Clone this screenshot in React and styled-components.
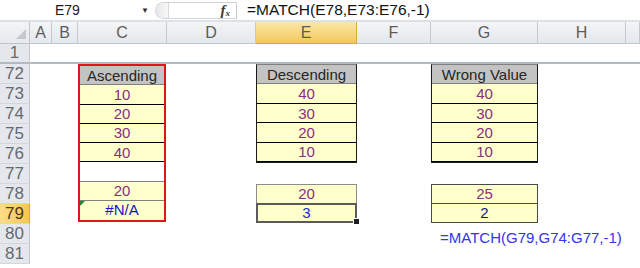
import styled, { createGlobalStyle, css } from 'styled-components';

const GlobalStyle = createGlobalStyle`
    html, body{
        margin: 0;
        padding: 0;
        background: #ffffff;
    }
    body{
        width: 640px;
        height: 268px;
        overflow: hidden;
        font-family: "Liberation Sans", Arial, sans-serif;
    }
`

const COLUMNS = [
    { key: 'A', width: 22 },
    { key: 'B', width: 26 },
    { key: 'C', width: 89 },
    { key: 'D', width: 89 },
    { key: 'E', width: 101, active: true },
    { key: 'F', width: 74 },
    { key: 'G', width: 107 },
    { key: 'H', width: 88 },
];

const ROWS = [72, 73, 74, 75, 76, 77, 78, 79, 80, 81];

const PURPLE = '#86307f';

function App(){
    return(
        <>
            <GlobalStyle />
            <Window>
                <FormulaBar>
                    <NameBox>
                        <span>E79</span>
                        <Arrow>▼</Arrow>
                    </NameBox>
                    <Grip>
                        <Knob />
                        <Fx>f<sub>x</sub></Fx>
                    </Grip>
                    <Formula>=MATCH(E78,E73:E76,-1)</Formula>
                </FormulaBar>
                <Sheet>
                    <Corner>
                        <svg width="10" height="10" viewBox="0 0 10 10">
                            <path d="M10 0 L10 10 L0 10 Z" fill="#c3c8cf" />
                        </svg>
                    </Corner>
                    {COLUMNS.map(c => (
                        <ColHead key={c.key} $active={c.active}>{c.key}</ColHead>
                    ))}
                    <ColHead />

                    <RowHead $row={2} $hidden>1</RowHead>
                    <HiddenLine />

                    {ROWS.map((r, i) => (
                        <RowHead key={r} $row={i + 3} $active={r === 79}>{r}</RowHead>
                    ))}

                    <RedBlock>
                        <Cell $tone="head">Ascending</Cell>
                        <Cell $line="#000">10</Cell>
                        <Cell $line="#000">20</Cell>
                        <Cell $line="#000">30</Cell>
                        <Cell $line="#000">40</Cell>
                        <Cell $tone="blank" $line="#808080" />
                        <Cell $line="#808080">20</Cell>
                        <Cell $ink="#1414c8" $line="transparent">
                            <ErrorMark />
                            #N/A
                        </Cell>
                    </RedBlock>

                    <Block $col={6} $row={3} $span={5}>
                        <Cell $tone="head" $line="#808080">Descending</Cell>
                        <Cell $line="#000">40</Cell>
                        <Cell $line="#000">30</Cell>
                        <Cell $line="#000">20</Cell>
                        <Cell $line="#000">10</Cell>
                    </Block>
                    <Block $col={6} $row={9} $span={2} $edge="#8c8c8c">
                        <Cell $line="#8c8c8c">20</Cell>
                        <Cell $ink="#2424e0" $line="transparent" $selected>
                            3
                            <Handle />
                        </Cell>
                    </Block>

                    <Block $col={8} $row={3} $span={5}>
                        <Cell $tone="head" $line="#808080">Wrong Value</Cell>
                        <Cell $line="#000">40</Cell>
                        <Cell $line="#000">30</Cell>
                        <Cell $line="#000">20</Cell>
                        <Cell $line="#000">10</Cell>
                    </Block>
                    <Block $col={8} $row={9} $span={2} $edge="#4a4a4a">
                        <Cell $line="#4a4a4a">25</Cell>
                        <Cell $ink="#141490" $line="transparent">2</Cell>
                    </Block>

                    <Note>=MATCH(G79,G74:G77,-1)</Note>
                </Sheet>
            </Window>
        </>
    );
}

export default App;

const Window = styled.div`
    width: 640px;
    height: 268px;
    display: flex;
    flex-direction: column;
    background: #ffffff;
`

const FormulaBar = styled.div`
    height: 20px;
    display: flex;
    align-items: center;
    background: #ffffff;
    border-bottom: 2px solid #dde1e6;
`

const NameBox = styled.div`
    width: 152px;
    height: 100%;
    display: flex;
    align-items: center;
    justify-content: space-between;
    box-sizing: border-box;
    padding: 0 3px 0 55px;
    font-size: 14px;
    color: #1a1a1a;
`

const Arrow = styled.span`
    font-size: 8px;
    color: #333;
`

const Grip = styled.div`
    width: 82px;
    height: 17px;
    margin-left: 3px;
    display: flex;
    align-items: center;
    justify-content: space-between;
    box-sizing: border-box;
    padding-right: 6px;
    border: 1px solid #cfd2d6;
    border-right: 1px solid #c6c9cd;
    border-radius: 9px 0 0 9px;
`

const Knob = styled.div`
    width: 12px;
    height: 15px;
    border-radius: 8px 0 0 8px;
    background: linear-gradient(90deg, #e6e7e9, #f7f7f8);
    border-right: 1px solid #d6d8db;
`

const Fx = styled.span`
    font-family: "Liberation Serif", "Times New Roman", serif;
    font-style: italic;
    font-weight: bold;
    font-size: 15px;
    color: #3a3a3a;
    sub{
        font-size: 9px;
        vertical-align: -1px;
    }
`

const Formula = styled.div`
    padding-left: 10px;
    font-size: 15.5px;
    color: #111;
    white-space: nowrap;
`

const Sheet = styled.div`
    flex: 1;
    display: grid;
    grid-template-columns: 30px ${COLUMNS.map(c => `${c.width}px`).join(' ')} 1fr;
    grid-template-rows: 22px 20px repeat(10, 20px) 1fr;
    color: ${PURPLE};
`

const headBase = css`
    display: flex;
    align-items: center;
    justify-content: center;
    box-sizing: border-box;
    color: #5c5c5c;
    font-size: 16px;
`

const Corner = styled.div`
    ${headBase};
    align-items: flex-end;
    justify-content: flex-end;
    padding: 0 3px 4px 0;
    background: linear-gradient(#f3f4f6, #e6e9ed);
    border-right: 1px solid #bfc4cb;
    border-bottom: 1px solid #bfc4cb;
`

const ColHead = styled.div`
    ${headBase};
    background: ${p => p.$active
        ? 'linear-gradient(#fbe7a6, #f4c75c)'
        : 'linear-gradient(#f4f5f7, #e4e7eb)'};
    border-right: 1px solid ${p => p.$active ? '#d9a93c' : '#c4c9d0'};
    border-bottom: 1px solid ${p => p.$active ? '#d9a93c' : '#bfc4cb'};
`

const RowHead = styled.div`
    ${headBase};
    grid-column: 1;
    grid-row: ${p => p.$row};
    font-size: 17px;
    background: ${p => p.$active
        ? 'linear-gradient(90deg, #fbdc86, #f6c55a)'
        : '#e4e8ed'};
    color: ${p => p.$active ? '#4a3a14' : '#666a70'};
    border-right: 1px solid ${p => p.$active ? '#d9a93c' : '#c2c7ce'};
    border-bottom: ${p => p.$hidden ? '2px solid #b4b9c0' : '1px solid #d3d7dd'};
`

const HiddenLine = styled.div`
    grid-column: 2 / -1;
    grid-row: 2;
    border-bottom: 2px solid #b4b9c0;
`

const Block = styled.div`
    grid-column: ${p => p.$col};
    grid-row: ${p => p.$row} / span ${p => p.$span};
    display: flex;
    flex-direction: column;
    border: 1px solid ${p => p.$edge || '#1a1a1a'};
    border-top-color: ${p => p.$edge || '#808080'};
    margin-bottom: 1px;
    position: relative;
`

const RedBlock = styled.div`
    grid-column: 4;
    grid-row: 3 / span 8;
    display: flex;
    flex-direction: column;
    border: 2px solid #e0141c;
    margin: 0 1px 2px 0;
`

const tones = {
    head: css`
        background: #c3c3c3;
        color: #262626;
    `,
    data: css`
        background: #ffffcc;
    `,
    blank: css`
        background: #ffffff;
    `,
};

const Cell = styled.div`
    flex: 1;
    display: flex;
    align-items: center;
    justify-content: center;
    position: relative;
    font-size: 15px;
    color: ${p => p.$ink || PURPLE};
    ${p => tones[p.$tone || 'data']};
    border-bottom: 1px solid ${p => p.$line || '#808080'};
    ${p => p.$selected && css`
        outline: 2px solid #5a5a5a;
        outline-offset: -1px;
    `}
`

const ErrorMark = styled.span`
    position: absolute;
    left: 0;
    top: 0;
    width: 0;
    height: 0;
    border-top: 5px solid #1f8a2e;
    border-right: 5px solid transparent;
`

const Handle = styled.span`
    position: absolute;
    right: -4px;
    bottom: -4px;
    width: 5px;
    height: 5px;
    background: #1e1e1e;
    border: 1px solid #ffffff;
`

const Note = styled.div`
    grid-column: 8 / -1;
    grid-row: 11;
    display: flex;
    align-items: center;
    padding: 6px 0 0 9px;
    font-size: 15px;
    color: #3434ec;
    white-space: nowrap;
`
